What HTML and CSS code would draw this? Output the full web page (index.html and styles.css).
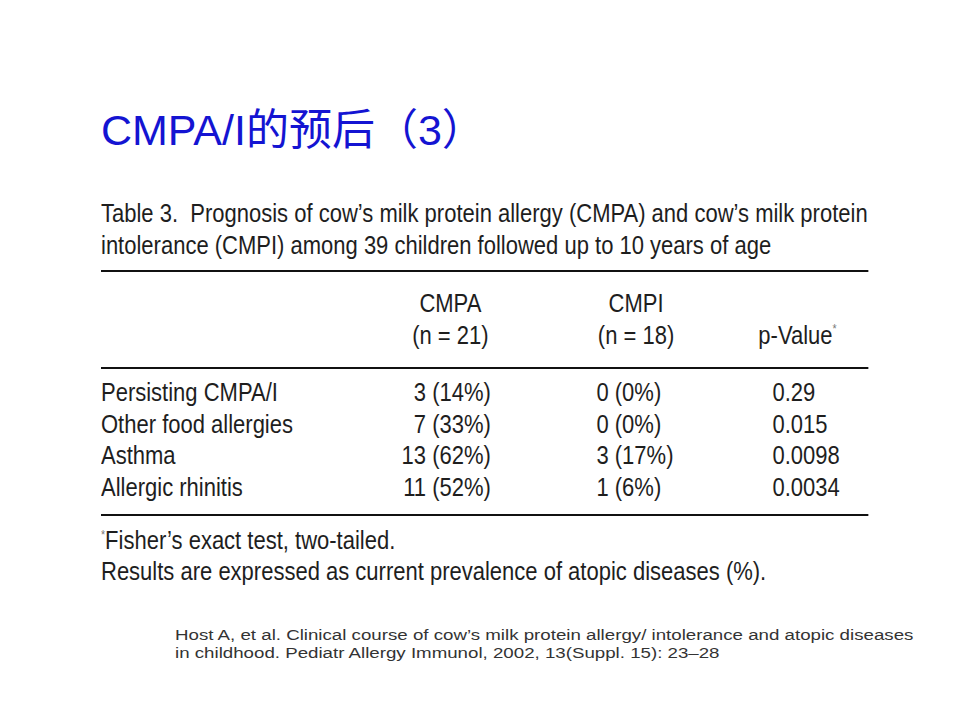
FILE: index.html
```html
<!DOCTYPE html>
<html lang="zh">
<head>
<meta charset="utf-8">
<title>CMPA/I的预后（3）</title>
<link rel="stylesheet" href="styles.css">
</head>
<body>
<main class="slide">
  <h1 class="title">CMPA/I的预后（3）</h1>
  <div class="cond">
    <p class="caption">Table 3.&nbsp; Prognosis of cow’s milk protein allergy (CMPA) and cow’s milk protein<br>intolerance (CMPI) among 39 children followed up to 10 years of age</p>
    <div class="table">
      <div class="row head">
        <span class="label"></span>
        <span class="cmpa">CMPA<br>(n&nbsp;=&nbsp;21)</span>
        <span class="cmpi">CMPI<br>(n&nbsp;=&nbsp;18)</span>
        <span class="pval"><br>p-Value<sup>*</sup></span>
      </div>
      <div class="body">
        <div class="row"><span class="label">Persisting CMPA/I</span><span class="cmpa">3 (14%)</span><span class="cmpi">0 (0%)</span><span class="pval">0.29</span></div>
        <div class="row"><span class="label">Other food allergies</span><span class="cmpa">7 (33%)</span><span class="cmpi">0 (0%)</span><span class="pval">0.015</span></div>
        <div class="row"><span class="label">Asthma</span><span class="cmpa">13 (62%)</span><span class="cmpi">3 (17%)</span><span class="pval">0.0098</span></div>
        <div class="row"><span class="label">Allergic rhinitis</span><span class="cmpa">11 (52%)</span><span class="cmpi">1 (6%)</span><span class="pval">0.0034</span></div>
      </div>
    </div>
    <p class="notes"><sup>*</sup>Fisher’s exact test, two-tailed.<br>Results are expressed as current prevalence of atopic diseases (%).</p>
  </div>
  <p class="cite">Host A, et al. Clinical course of cow’s milk protein allergy/ intolerance and atopic diseases<br>in childhood. Pediatr Allergy Immunol, 2002, 13(Suppl. 15): 23–28</p>
</main>
</body>
</html>
```

FILE: styles.css
```css
html, body {
  margin: 0;
  padding: 0;
  background: #ffffff;
  overflow: hidden;
}
.slide {
  width: 960px;
  height: 720px;
  box-sizing: border-box;
  padding: 104px 0 0 101px;
  font-family: "Liberation Sans", Arial, sans-serif;
  color: #1e1e1e;
  overflow: hidden;
}
.title {
  margin: 0;
  font-family: "Liberation Sans", "Noto Sans CJK SC", sans-serif;
  font-weight: normal;
  font-size: 43px;
  line-height: 52px;
  height: 52px;
  color: #1414d2;
}
/* condensed face emulation: the reference uses a narrow grotesque */
.cond {
  width: 872px;
  margin-top: 41px;
  transform: scaleX(0.88);
  transform-origin: 0 0;
  font-size: 25px;
}
.caption {
  margin: 0;
  line-height: 32px;
  white-space: nowrap;
}
.table {
  margin-top: 9px;
  border-top: 2px solid #111;
  border-bottom: 2px solid #111;
}
.row {
  display: grid;
  grid-template-columns: 331px 112px 120px 90px 110px 109px;
  line-height: 31.7px;
}
.row .label { grid-column: 1; white-space: nowrap; }
.row .cmpa { grid-column: 2; text-align: right; white-space: nowrap; }
.row .cmpi { grid-column: 4; text-align: left; white-space: nowrap; }
.row .pval { grid-column: 6; white-space: nowrap; }
.head {
  padding: 15px 0 16px 0;
  border-bottom: 2px solid #111;
  line-height: 32px;
}
.head .cmpa { text-align: center; padding-left: 20px; }
.head .cmpi { text-align: center; margin: 0 -10px; }
.head .pval { margin-left: -16px; }
sup {
  font-size: 12px;
  vertical-align: 11px;
  line-height: 0;
  color: #777;
}
.body {
  padding: 8px 0 10px 0;
}
.notes {
  margin: 9px 0 0 0;
  line-height: 31px;
  white-space: nowrap;
}
.notes sup { vertical-align: 10px; }
.cite {
  margin: 39px 0 0 74px;
  font-size: 15.5px;
  line-height: 18px;
  color: #333333;
  white-space: nowrap;
  transform: scaleX(1.206);
  transform-origin: 0 0;
}
```
